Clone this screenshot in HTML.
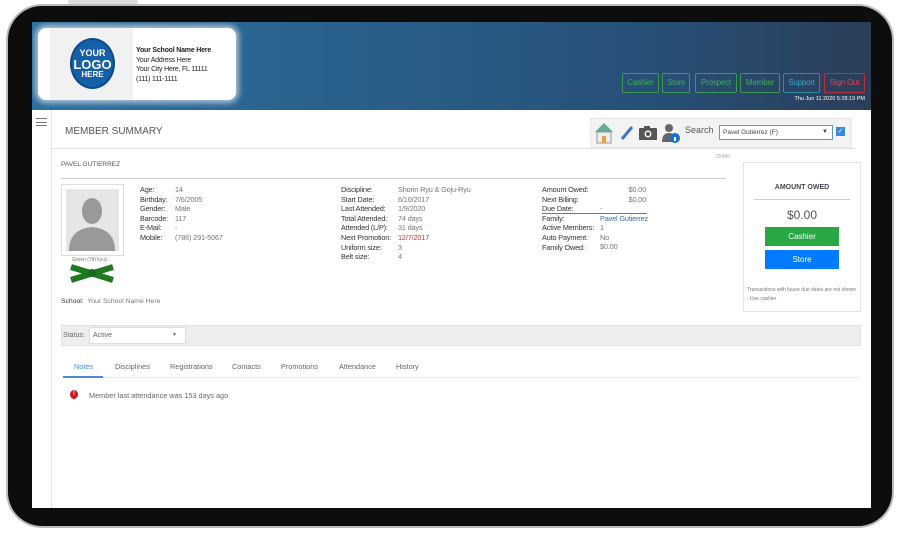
<!DOCTYPE html>
<html><head><meta charset="utf-8"><style>
*{box-sizing:border-box;margin:0;padding:0}
body{width:900px;height:533px;background:#fff;position:relative;overflow:hidden;font-family:"Liberation Sans",sans-serif;color:#555}
.abs{position:absolute}
.frame{left:8px;top:6px;width:884px;height:520px;background:#0d0d0d;border-radius:34px;box-shadow:0 0 0 2px #bbb}
.screen{left:32px;top:22px;width:839px;height:486px;background:#fff;overflow:hidden}
.hdr{left:0;top:0;width:839px;height:88px;background:linear-gradient(90deg,#2d6f9e 0%,#2a5f8a 40%,#274f76 75%,#2b3e58 100%)}
.logo{left:6px;top:6px;width:198px;height:72px;background:#fff;border-radius:8px;box-shadow:0 0 6px 3px rgba(255,255,255,.6)}
.btn{top:51px;height:20px;border:1px solid #3a9a52;color:#3fae55;font-size:8px;line-height:18px;text-align:center;border-radius:2px;letter-spacing:-.2px}
.t{font-size:7.3px;line-height:9.6px;letter-spacing:-.15px}
.b{color:#333}
.tab{top:340px;font-size:7.3px;color:#666}
</style></head><body>
<div class="abs" style="left:68px;top:0;width:70px;height:4px;background:#ddd;border-radius:2px"></div>
<div class="abs frame"></div>
<div class="abs screen">
 <div class="abs hdr"></div>
 <div class="abs logo">
  <div class="abs" style="left:12px;top:0;width:83px;height:72px;background:#f1f1f1"></div>
  <div class="abs" style="left:32px;top:10px;width:45px;height:51px;border-radius:50%;background:#1560a8;border:2px solid #0d4a87;color:#fff;text-align:center;font-weight:bold;line-height:1">
   <div style="font-size:9px;margin-top:9px">YOUR</div><div style="font-size:13px">LOGO</div><div style="font-size:8px">HERE</div></div>
  <div class="abs" style="left:98px;top:18px;color:#222;font-size:7px;line-height:9.5px;letter-spacing:-.2px"><b>Your School Name Here</b><br>Your Address Here<br>Your City Here, FL 11111<br>(111) 111-1111</div>
 </div>
 <div class="abs btn" style="left:590px;width:37px">Cashier</div>
 <div class="abs btn" style="left:630px;width:28px">Store</div>
 <div class="abs btn" style="left:663px;width:42px">Prospect</div>
 <div class="abs btn" style="left:708px;width:40px">Member</div>
 <div class="abs btn" style="left:751px;width:37px;border-color:#2a8aa8;color:#3aa8d0">Support</div>
 <div class="abs btn" style="left:792px;width:41px;border-color:#b83040;color:#e04050">Sign Out</div>
 <div class="abs" style="right:6px;top:74px;font-size:5.5px;color:#fff">Thu Jun 11 2020 5:28:19 PM</div>
 <div class="abs" style="left:0;top:88px;width:20px;height:398px;background:#fff;border-right:1px solid #e4e4e4"></div>
 <div class="abs" style="left:4px;top:96px;width:11px;height:8px;border-top:1px solid #777;border-bottom:1px solid #777"><div style="margin-top:3px;border-top:1px solid #777"></div></div>
 <div class="abs" style="left:33px;top:104px;font-size:10px;color:#555">MEMBER SUMMARY</div>
 <div class="abs" style="left:558px;top:96px;width:262px;height:30px;background:#f3f3f3;border:1px solid #e6e6e6"></div>
 <div class="abs" style="left:562px;top:100px;width:20px;height:22px">
  <svg width="20" height="22"><polygon points="10,1 19,10 1,10" fill="#6a9"/><rect x="3" y="10" width="14" height="11" fill="#eee" stroke="#999"/><rect x="8" y="14" width="4" height="7" fill="#e8a040"/></svg></div>
 <svg class="abs" style="left:587px;top:102px" width="16" height="18"><path d="M3 15 L13 3" stroke="#3a78c0" stroke-width="3"/></svg>
 <svg class="abs" style="left:606px;top:103px" width="20" height="16"><rect x="1" y="3" width="18" height="12" rx="1" fill="#555"/><rect x="6" y="1" width="6" height="3" fill="#555"/><circle cx="10" cy="9" r="3.5" fill="#fff"/><circle cx="10" cy="9" r="2" fill="#555"/></svg>
 <svg class="abs" style="left:629px;top:100px" width="20" height="22"><circle cx="8" cy="6" r="4" fill="#666"/><path d="M1 20 Q1 11 8 11 Q15 11 15 20Z" fill="#666"/><circle cx="14" cy="16" r="5" fill="#1a70c8"/><rect x="13" y="15" width="2" height="4" fill="#fff"/></svg>
 <div class="abs" style="left:653px;top:103px;font-size:9px;color:#555">Search</div>
 <div class="abs" style="left:687px;top:103px;width:114px;height:15px;border:1px solid #5a9ad0;font-size:6.5px;line-height:13px;padding-left:3px;color:#444;background:#fff">Pavel Gutierrez (F)<span style="float:right;margin-right:4px;font-size:6px">▼</span></div>
 <div class="abs" style="left:804px;top:105px;width:9px;height:9px;background:#3a8ad8;color:#fff;font-size:7px;line-height:9px;text-align:center">✓</div>
 <div class="abs" style="left:20px;top:126px;width:803px;border-top:1px solid #e2e2e2"></div>
 <div class="abs" style="left:29px;top:139px;font-size:6.5px;color:#555">PAVEL GUTIERREZ</div>
 <div class="abs" style="left:684px;top:132px;font-size:5px;color:#aaa">25496</div>
 <div class="abs" style="left:28px;top:156px;width:666px;border-top:1px solid #ccc"></div>
 <div class="abs" style="left:29px;top:162px;width:63px;height:72px;border:1px solid #ddd;padding:4px"><svg width="53" height="62"><rect width="53" height="62" fill="#e6e6e6"/><ellipse cx="26" cy="22" rx="10" ry="13" fill="#999"/><path d="M3 62 Q3 40 26 38 Q49 40 49 62Z" fill="#999"/></svg></div>
 <div class="abs" style="left:40px;top:235px;font-size:5px;color:#777">Green (7th kyu)</div>
 <svg class="abs" style="left:37px;top:242px" width="46" height="20"><path d="M2 3 L44 16 M2 16 L44 3" stroke="#1f7a1f" stroke-width="6"/><circle cx="23" cy="9" r="4" fill="#1a6a1a"/></svg>
 <div class="abs t b" style="left:108px;top:163px">Age:<br>Birthday:<br>Gender:<br>Barcode:<br>E-Mail:<br>Mobile:</div>
 <div class="abs t" style="left:143px;top:163px;color:#777">14<br>7/6/2005<br>Male<br>117<br>-<br>(786) 291-5067</div>
 <div class="abs" style="left:29px;top:276px;font-size:6.8px;color:#777"><span class="b">School:</span>&nbsp; Your School Name Here</div>
 <div class="abs t b" style="left:309px;top:163px">Discipline:<br>Start Date:<br>Last Attended:<br>Total Attended:<br>Attended (L/P):<br>Next Promotion:<br>Uniform size:<br>Belt size:</div>
 <div class="abs t" style="left:366px;top:163px;color:#777">Shorin Ryu &amp; Goju-Ryu<br>6/10/2017<br>1/9/2020<br>74 days<br>31 days<br><span style="color:#d03030">12/7/2017</span><br>3<br>4</div>
 <div class="abs t b" style="left:510px;top:163px">Amount Owed:<br>Next Billing:<br>Due Date:<br>Family:<br>Active Members:<br>Auto Payment:<br>Family Owed:</div>
 <div class="abs t" style="left:567px;top:163px;color:#777;text-align:right;width:47px">$0.00<br>$0.00</div>
 <div class="abs t" style="left:568px;top:182px;color:#777">-<br><span style="color:#3a6aa8">Pavel Gutierrez</span><br>1<br>No<br>$0.00</div>
 <div class="abs" style="left:510px;top:191px;width:105px;border-top:1px solid #777"></div>
 <div class="abs" style="left:711px;top:140px;width:118px;height:150px;border:1px solid #e4e4e4">
  <div style="text-align:center;font-size:7px;font-weight:bold;color:#445;margin-top:21px">AMOUNT OWED</div>
  <div style="margin:8px 10px 0;border-top:1px solid #ccc"></div>
  <div style="text-align:center;font-size:12px;color:#555;margin-top:8px">$0.00</div>
  <div style="margin:5px 21px 0;height:19px;background:#28a745;color:#fff;font-size:8px;text-align:center;line-height:19px">Cashier</div>
  <div style="margin:4px 21px 0;height:19px;background:#007bff;color:#fff;font-size:8px;text-align:center;line-height:19px">Store</div>
  <div style="font-size:5px;color:#777;margin:17px 3px 0;line-height:9px">Transactions with future due dates are not shown - Use cashier</div>
 </div>
 <div class="abs" style="left:29px;top:303px;width:800px;height:21px;background:#eee;border:1px solid #e0e0e0"></div>
 <div class="abs" style="left:31px;top:310px;font-size:7px;color:#666">Status:</div>
 <div class="abs" style="left:57px;top:305px;width:97px;height:17px;background:#fff;border:1px solid #ddd;font-size:7px;line-height:15px;padding-left:3px;color:#666">Active<span style="float:right;margin-right:8px;font-size:5px">▼</span></div>
 <div class="abs tab" style="left:42px;color:#4a8ad0">Notes</div>
 <div class="abs tab" style="left:83px">Disciplines</div>
 <div class="abs tab" style="left:138px">Registrations</div>
 <div class="abs tab" style="left:200px">Contacts</div>
 <div class="abs tab" style="left:249px">Promotions</div>
 <div class="abs tab" style="left:307px">Attendance</div>
 <div class="abs tab" style="left:364px">History</div>
 <div class="abs" style="left:31px;top:355px;width:795px;border-top:1px solid #e6e6e6"></div>
 <div class="abs" style="left:31px;top:354px;width:40px;border-top:2px solid #4a8ad0"></div>
 <div class="abs" style="left:38px;top:368px;width:8px;height:9px;border-radius:50%;background:#d01818;color:#fff;font-size:6px;font-weight:bold;text-align:center;line-height:9px">!</div>
 <div class="abs" style="left:57px;top:369px;font-size:7.3px;color:#666">Member last attendance was 153 days ago.</div>
</div>
</body></html>
